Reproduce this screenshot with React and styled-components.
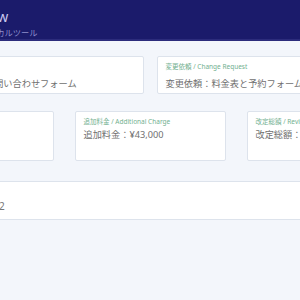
import React from 'react';
import styled, { createGlobalStyle } from 'styled-components';

const GlobalStyle = createGlobalStyle`
  html, body {
    margin: 0;
    padding: 0;
    background-color: #f3f6fb;
    overflow: hidden;
  }
  body {
    font-family: "Noto Sans", "Noto Sans CJK JP", sans-serif;
  }
`;

const Page = styled.div`
  width: 300px;
  min-height: 300px;
  background-color: #f3f6fb;
`;

const Header = styled.header`
  background-color: #1b1b6b;
  border-bottom: 2px solid #2c2c7c;
  height: 39px;
  display: flex;
  justify-content: center;
`;

const Center = styled.div`
  display: flex;
  justify-content: center;
`;

const Inner = styled.div`
  flex-shrink: 0;
  width: 495px;
  box-sizing: border-box;
  padding: ${p => p.$pad || '0'};
`;

const Title = styled.div`
  color: #c9c9ef;
  font-size: 14px;
  line-height: 16px;
  padding-top: 9px;
  padding-left: 3px;
`;

const Subtitle = styled.div`
  color: #8f8fcc;
  font-size: 8.2px;
  line-height: 11px;
  margin-top: 2px;
`;

const Grid = styled.div`
  display: grid;
  grid-template-columns: repeat(${p => p.$cols}, 1fr);
  column-gap: ${p => p.$gap}px;
  margin-top: ${p => p.$top}px;
`;

const Card = styled.div`
  background-color: #fff;
  border: 1px solid #dde3ec;
  border-radius: 2px;
  box-sizing: border-box;
  height: ${p => p.$h}px;
  padding: 5px 8px 0;
`;

const Label = styled.div`
  color: #72b090;
  font-size: 6.5px;
  line-height: 9px;
`;

const Value = styled.div`
  color: #707070;
  font-size: 9.2px;
  line-height: 12px;
  margin-top: ${p => p.$gap}px;
  white-space: nowrap;
`;

const Note = styled.div`
  color: #777;
  font-size: 10px;
  line-height: 12px;
  padding-top: 13px;
  white-space: nowrap;
`;

export default function App() {
  return (
    <Page>
      <GlobalStyle />
      <Header>
        <Inner $pad="0 12px">
          <Title>Estimate Flow</Title>
          <Subtitle>見積・変更依頼のローカルツール</Subtitle>
        </Inner>
      </Header>
      <Center>
        <Inner>
          <Grid $cols={2} $gap={13} $top={15}>
            <Card $h={38}>
              <Label>案件 / Project</Label>
              <Value $gap={7}>案件名：法人様向け問い合わせフォーム</Value>
            </Card>
            <Card $h={38}>
              <Label>変更依頼 / Change Request</Label>
              <Value $gap={7}>変更依頼：料金表と予約フォームの追加</Value>
            </Card>
          </Grid>
          <Grid $cols={3} $gap={21} $top={17}>
            <Card $h={50}>
              <Label>当初見積 / Original</Label>
              <Value $gap={3}>当初見積：¥180,000</Value>
            </Card>
            <Card $h={50}>
              <Label>追加料金 / Additional Charge</Label>
              <Value $gap={3}>追加料金：¥43,000</Value>
            </Card>
            <Card $h={50}>
              <Label>改定総額 / Revised Total</Label>
              <Value $gap={3}>改定総額：¥223,000</Value>
            </Card>
          </Grid>
          <Grid $cols={1} $gap={0} $top={20}>
            <Card $h={39}>
              <Note>更新日：2024/05/12</Note>
            </Card>
          </Grid>
        </Inner>
      </Center>
    </Page>
  );
}
